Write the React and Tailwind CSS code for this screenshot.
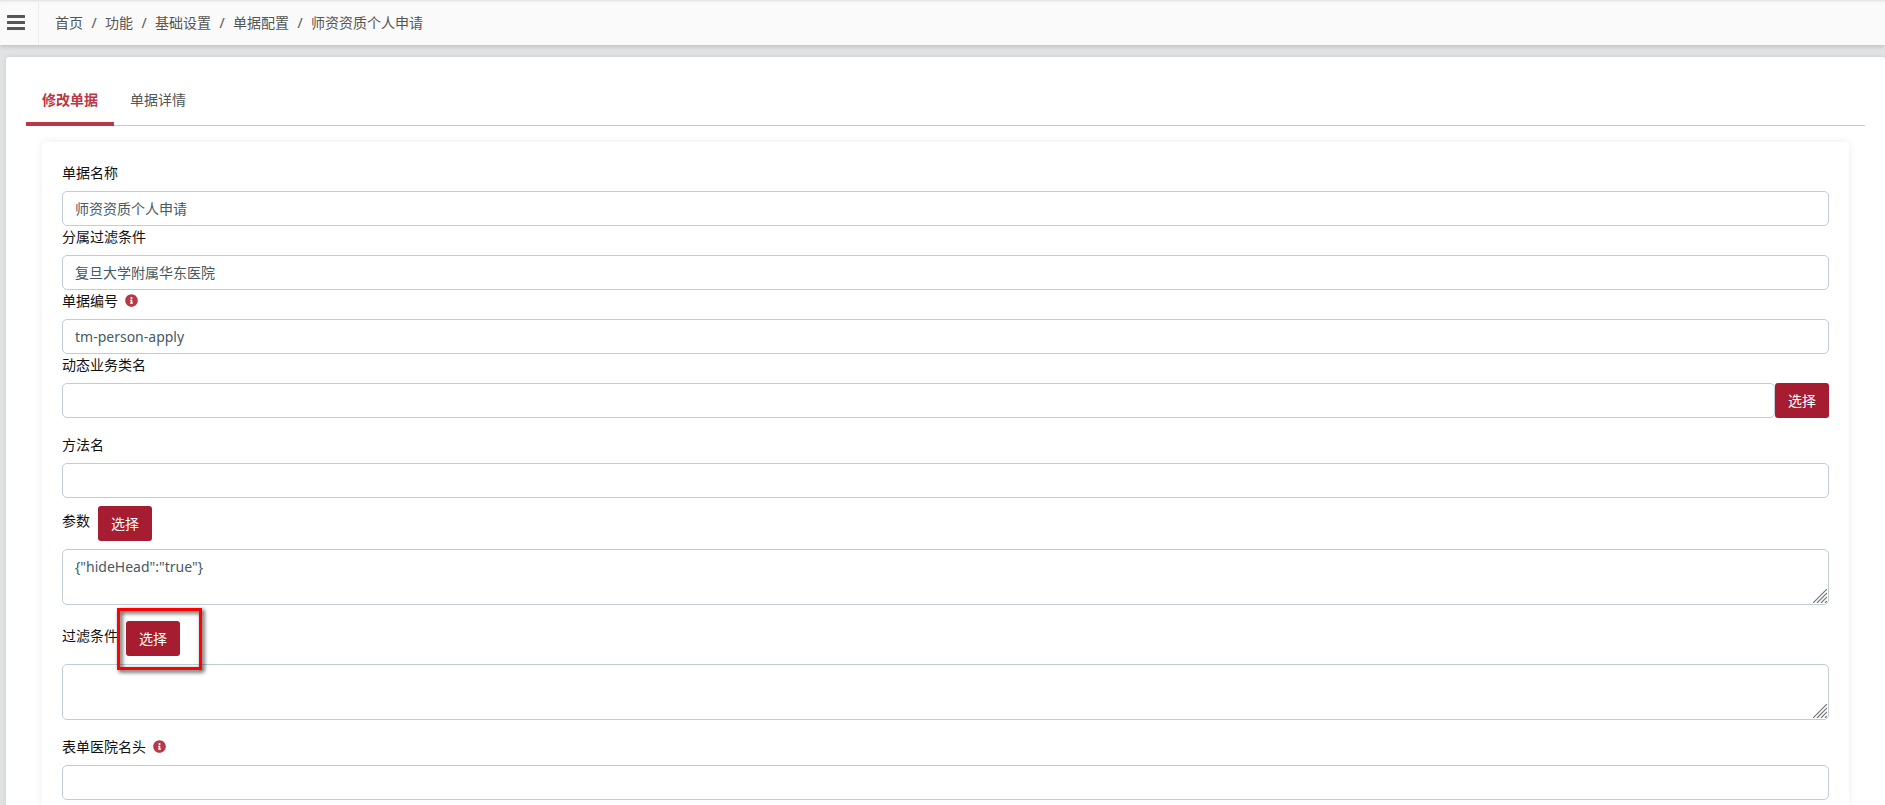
import { useState } from "react";
import { FaInfoCircle } from "react-icons/fa";

const crumbs = ["首页", "功能", "基础设置", "单据配置", "师资资质个人申请"];
const tabs = ["修改单据", "单据详情"];

const inputClass =
  "block w-full h-[35px] px-3 pb-px rounded-[5px] border border-[#c0cdd4] bg-white text-[#455a64] outline-none";
const textareaClass =
  "block w-full h-14 px-3 py-[6px] rounded-[5px] border border-[#c0cdd4] bg-white text-[#455a64] outline-none resize-y overflow-hidden";

function SelectButton() {
  return (
    <button
      type="button"
      className="h-[35px] w-[54px] shrink-0 rounded-[3px] bg-[#a61c30] text-white hover:bg-[#8f1829]"
    >
      选择
    </button>
  );
}

function ResizeGrip() {
  return (
    <svg
      className="pointer-events-none absolute bottom-[2px] right-[2px] size-[14px] bg-white"
      viewBox="0 0 14 14"
      fill="none"
      stroke="#777777"
      strokeWidth="1.2"
    >
      <path d="M0 14 14 0M4 14 14 4M8 14 14 8M12 14 14 12" />
    </svg>
  );
}

function Field({ id, label, info, value, onChange, button }) {
  return (
    <div>
      <div className="mb-2 flex items-center gap-[7px]">
        <label htmlFor={id}>{label}</label>
        {info && <FaInfoCircle className="size-[13px] text-[#b93746]" />}
      </div>
      <div className="flex">
        <input id={id} name={id} type="text" className={inputClass} value={value} onChange={onChange} />
        {button && <SelectButton />}
      </div>
    </div>
  );
}

function TextField({ id, label, value, onChange, highlight }) {
  return (
    <div>
      <div className="mb-2 flex items-start gap-2">
        <label htmlFor={id} className="pt-1">
          {label}
        </label>
        <div className="relative">
          <SelectButton />
          {/* Red callout around the button */}
          {highlight && (
            <div className="pointer-events-none absolute -left-[9px] -top-[13px] z-10 h-[62px] w-[85px] border-3 border-[#ff0000] drop-shadow-[2px_2px_2px_rgba(0,0,0,0.8)]" />
          )}
        </div>
      </div>
      <div className="relative">
        <textarea id={id} name={id} className={textareaClass} value={value} onChange={onChange} />
        <ResizeGrip />
      </div>
    </div>
  );
}

export default function App() {
  const [activeTab, setActiveTab] = useState(0);
  const [form, setForm] = useState({
    name: "师资资质个人申请",
    hospital: "复旦大学附属华东医院",
    code: "tm-person-apply",
    className: "",
    method: "",
    params: '{"hideHead":"true"}',
    filter: "",
    formHead: "",
  });

  const bind = (key) => ({
    id: key,
    value: form[key],
    onChange: (e) => setForm({ ...form, [key]: e.target.value }),
  });

  return (
    <div className="flex min-h-screen flex-col bg-[#e1e3e5] text-[14px] leading-[21px] text-[#111111] font-['Noto_Sans','Noto_Sans_CJK_SC',sans-serif]">
      {/* Top bar */}
      <header className="relative flex h-[45px] items-stretch bg-[#fafafa] shadow-[0_1px_5px_rgba(0,0,0,0.2),inset_0_3px_3px_-2px_rgba(0,0,0,0.12)]">
        <button
          type="button"
          aria-label="菜单"
          className="flex w-[39px] items-center border-r border-[#ededed] pl-[7px] text-[#555555]"
        >
          <svg width="18" height="15" viewBox="0 0 18 15" fill="currentColor">
            <rect width="18" height="3" rx="0.5" />
            <rect y="6" width="18" height="3" rx="0.5" />
            <rect y="12" width="18" height="3" rx="0.5" />
          </svg>
        </button>
        <nav className="flex items-center pl-4 text-[#555555]">
          {crumbs.map((crumb, i) => (
            <span key={crumb} className="flex">
              {i > 0 && <span className="w-[22px] text-center">/</span>}
              <a href="#">{crumb}</a>
            </span>
          ))}
        </nav>
      </header>

      <main className="ml-[6px] mt-3 flex flex-1 flex-col rounded-t-[3px] bg-white px-5 pt-5 shadow-[0_0_6px_rgba(0,0,0,0.1)]">
        {/* Tabs */}
        <div role="tablist" className="flex border-b border-[#c0cdd4]">
          {tabs.map((tab, i) => (
            <button
              key={tab}
              type="button"
              role="tab"
              aria-selected={activeTab === i}
              onClick={() => setActiveTab(i)}
              className={
                activeTab === i
                  ? "-mb-px h-[49px] border-b-4 border-[#b93746] px-4 font-bold text-[#b93746]"
                  : "-mb-px h-[49px] border-b-4 border-transparent px-4 text-[#555555]"
              }
            >
              {tab}
            </button>
          ))}
        </div>

        {/* Form */}
        <form className="mx-4 mt-4 flex-1 rounded-t-[3px] bg-white px-5 pt-5 shadow-[0_0_8px_rgba(0,0,0,0.08)]">
          <Field label="单据名称" {...bind("name")} />
          <Field label="分属过滤条件" {...bind("hospital")} />
          <Field label="单据编号" info {...bind("code")} />
          <Field label="动态业务类名" button {...bind("className")} />
          <div className="mt-4">
            <Field label="方法名" {...bind("method")} />
          </div>
          <div className="mt-2 flex flex-col gap-4">
            <TextField label="参数" {...bind("params")} />
            <TextField label="过滤条件" highlight {...bind("filter")} />
            <Field label="表单医院名头" info {...bind("formHead")} />
          </div>
        </form>
      </main>
    </div>
  );
}
